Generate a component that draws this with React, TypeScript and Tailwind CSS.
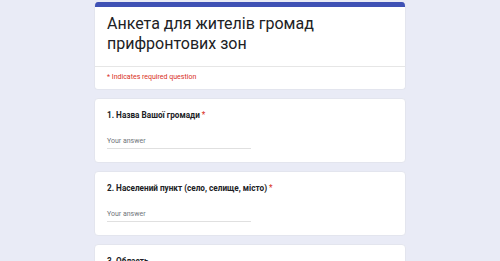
import React from "react";

function Question({ label, required = true }: { label: string; required?: boolean }) {
  return (
    <div className="bg-white rounded-[4px] border border-[#e3e5ee] px-3 pt-[10px] pb-[13px]">
      <div className="text-[8.2px] leading-[12px] font-bold text-[#202124]">
        {label}
        {required && <span className="text-[#d93025] font-normal"> *</span>}
      </div>
      <div className="mt-[15px] w-[144px] border-b border-[#e0e0e0] pb-[2px] text-[7px] leading-[10px] text-[#70757a]">
        Your answer
      </div>
    </div>
  );
}

export default function App() {
  return (
    <div
      className="min-h-screen bg-[#e9ebf6] pt-[2px]"
      style={{ fontFamily: "Roboto, 'Noto Sans', Arial, sans-serif" }}
    >
      <div className="mx-auto w-[312px] flex flex-col gap-[8px]">
        <div className="bg-white rounded-[4px] overflow-hidden border border-[#e3e5ee] border-t-0">
          <div className="h-[5px] bg-[#3f51b5]" />
          <div className="px-3 pt-[7px] pb-[12px] text-[16px] leading-[20px] text-[#202124]">
            Анкета для жителів громад
            <br />
            прифронтових зон
          </div>
          <div className="border-t border-[#e6e6e6] px-3 pt-[5px] pb-[7px] text-[7px] leading-[10px] text-[#d93025]">
            * Indicates required question
          </div>
        </div>
        <Question label="1. Назва Вашої громади" />
        <Question label="2. Населений пункт (село, селище, місто)" />
        <Question label="3. Область" required={false} />
      </div>
    </div>
  );
}
